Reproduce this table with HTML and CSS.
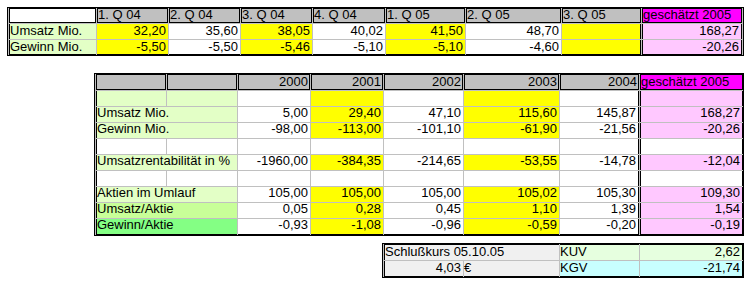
FILE: index.html
```html
<!DOCTYPE html>
<html lang="de">
<head>
<meta charset="utf-8">
<title>Kennzahlen</title>
<link rel="stylesheet" href="styles.css">
</head>
<body>
<div class="sheet t1">
  <div class="c h hw"></div>
  <div class="c h">1. Q 04</div>
  <div class="c h">2. Q 04</div>
  <div class="c h">3. Q 04</div>
  <div class="c h">4. Q 04</div>
  <div class="c h">1. Q 05</div>
  <div class="c h">2. Q 05</div>
  <div class="c h">3. Q 05</div>
  <div class="c h mag">geschätzt 2005</div>

  <div class="c lbl">Umsatz Mio.</div>
  <div class="c n y">32,20</div>
  <div class="c n">35,60</div>
  <div class="c n y">38,05</div>
  <div class="c n">40,02</div>
  <div class="c n y">41,50</div>
  <div class="c n">48,70</div>
  <div class="c n y br"></div>
  <div class="c n gs pk">168,27</div>

  <div class="c lbl bb">Gewinn Mio.</div>
  <div class="c n y bb">-5,50</div>
  <div class="c n bb">-5,50</div>
  <div class="c n y bb">-5,46</div>
  <div class="c n bb">-5,10</div>
  <div class="c n y bb">-5,10</div>
  <div class="c n bb">-4,60</div>
  <div class="c n y br bb"></div>
  <div class="c n gs pk bb">-20,26</div>
</div>

<div class="sheet t2">
  <div class="c h2"></div>
  <div class="c h2"></div>
  <div class="c h2 n">2000</div>
  <div class="c h2 n">2001</div>
  <div class="c h2 n">2002</div>
  <div class="c h2 n">2003</div>
  <div class="c h2 n">2004</div>
  <div class="c h2 mag">geschätzt 2005</div>

  <div class="c lbl"></div>
  <div class="c lbl2"></div>
  <div class="c n"></div>
  <div class="c n y"></div>
  <div class="c n"></div>
  <div class="c n y"></div>
  <div class="c n br"></div>
  <div class="c n gs pk"></div>

  <div class="c lbl span2">Umsatz Mio.</div>
  <div class="c n">5,00</div>
  <div class="c n y">29,40</div>
  <div class="c n">47,10</div>
  <div class="c n y">115,60</div>
  <div class="c n br">145,87</div>
  <div class="c n gs pk">168,27</div>

  <div class="c lbl span2">Gewinn Mio.</div>
  <div class="c n">-98,00</div>
  <div class="c n y">-113,00</div>
  <div class="c n">-101,10</div>
  <div class="c n y">-61,90</div>
  <div class="c n br">-21,56</div>
  <div class="c n gs pk">-20,26</div>

  <div class="c bl"></div>
  <div class="c"></div>
  <div class="c n"></div>
  <div class="c n"></div>
  <div class="c n"></div>
  <div class="c n"></div>
  <div class="c n br"></div>
  <div class="c n gs"></div>

  <div class="c lbl span2">Umsatzrentabilität in %</div>
  <div class="c n">-1960,00</div>
  <div class="c n y">-384,35</div>
  <div class="c n">-214,65</div>
  <div class="c n y">-53,55</div>
  <div class="c n br">-14,78</div>
  <div class="c n gs pk">-12,04</div>

  <div class="c bl"></div>
  <div class="c"></div>
  <div class="c n"></div>
  <div class="c n"></div>
  <div class="c n"></div>
  <div class="c n"></div>
  <div class="c n br"></div>
  <div class="c n gs"></div>

  <div class="c lbl span2">Aktien im Umlauf</div>
  <div class="c n">105,00</div>
  <div class="c n y">105,00</div>
  <div class="c n">105,00</div>
  <div class="c n y">105,02</div>
  <div class="c n br">105,30</div>
  <div class="c n gs pk">109,30</div>

  <div class="c lbl g2 span2">Umsatz/Aktie</div>
  <div class="c n">0,05</div>
  <div class="c n y">0,28</div>
  <div class="c n">0,45</div>
  <div class="c n y">1,10</div>
  <div class="c n br">1,39</div>
  <div class="c n gs pk">1,54</div>

  <div class="c lbl g3 span2 bb">Gewinn/Aktie</div>
  <div class="c n bb">-0,93</div>
  <div class="c n y bb">-1,08</div>
  <div class="c n bb">-0,96</div>
  <div class="c n y bb">-0,59</div>
  <div class="c n br bb">-0,20</div>
  <div class="c n gs pk bb">-0,19</div>
</div>

<div class="sheet t3">
  <div class="c gy bl bt span2">Schlußkurs 05.10.05</div>
  <div class="c kuv bt">KUV</div>
  <div class="c n kuv bt brr">2,62</div>

  <div class="c n gy bl bb">4,03</div>
  <div class="c gy bb">€</div>
  <div class="c cy bb">KGV</div>
  <div class="c n cy bb brr">-21,74</div>
</div>
</body>
</html>
```

FILE: styles.css
```css
* {
  box-sizing: border-box;
}

html,
body {
  margin: 0;
  padding: 0;
  background: #ffffff;
}

body {
  width: 752px;
  height: 287px;
  overflow: hidden;
  font-family: "Liberation Sans", Arial, sans-serif;
  font-size: 13px;
  color: #000000;
}

.sheet {
  display: grid;
  gap: 1px;
  width: max-content;
  background: #c0c0c0;
  border: 1px solid #000000;
}

.t1 {
  margin: 7px 0 0 7px;
  padding: 0 1px;
  grid-template-columns: 87px 71px 71px 71px 72px 79px 95px 79px 100px;
  grid-template-rows: 15px 15px 15px;
}

.t2 {
  margin: 17px 0 0 94px;
  padding: 0 0 0 1px;
  grid-template-columns: 70px 70px 72px 72px 79px 95px 79px 103px;
  grid-template-rows: 16px repeat(8, 15px) 16px;
}

.t3 {
  margin: 7px 0 0 382px;
  padding: 0 0 0 1px;
  grid-template-columns: 79px 95px 79px 103px;
  grid-template-rows: 16px 16px;
}

.c {
  background: #ffffff;
  white-space: nowrap;
  line-height: 13px;
  overflow: visible;
}

.t2 .c {
  line-height: 12px;
}

.n {
  text-align: right;
  padding-right: 2px;
}

.h {
  background: #c0c0c0;
  border: 1px solid #000000;
  line-height: 11px;
}

.hw {
  background: #ffffff;
}

.t2 .h2 {
  background: #c0c0c0;
  border: 1px solid #000000;
  line-height: 13px;
  padding-right: 1px;
}

.t2 .mag,
.mag {
  background: #ff00ff;
  text-align: left;
}

.lbl {
  background: #e3ffc6;
  border-left: 1px solid #000000;
}

.lbl2 {
  background: #e3ffc6;
}

.g2 {
  background: #c8ff98;
}

.g3 {
  background: #84ff84;
}

.span2 {
  grid-column: span 2;
}

.y {
  background: #ffff00;
}

.pk {
  background: #ffc8ff;
}

.gs {
  border-left: 1px solid #000000;
  border-right: 1px solid #000000;
}

.br {
  border-right: 1px solid #000000;
}

.brr {
  border-right: 1px solid #000000;
}

.bl {
  border-left: 1px solid #000000;
}

.bb {
  border-bottom: 1px solid #000000;
}

.bt {
  border-top: 1px solid #000000;
}

.gy {
  background: #f0f0f0;
}

.kuv {
  background: #e6ffdf;
}

.cy {
  background: #c8ffff;
}
```
